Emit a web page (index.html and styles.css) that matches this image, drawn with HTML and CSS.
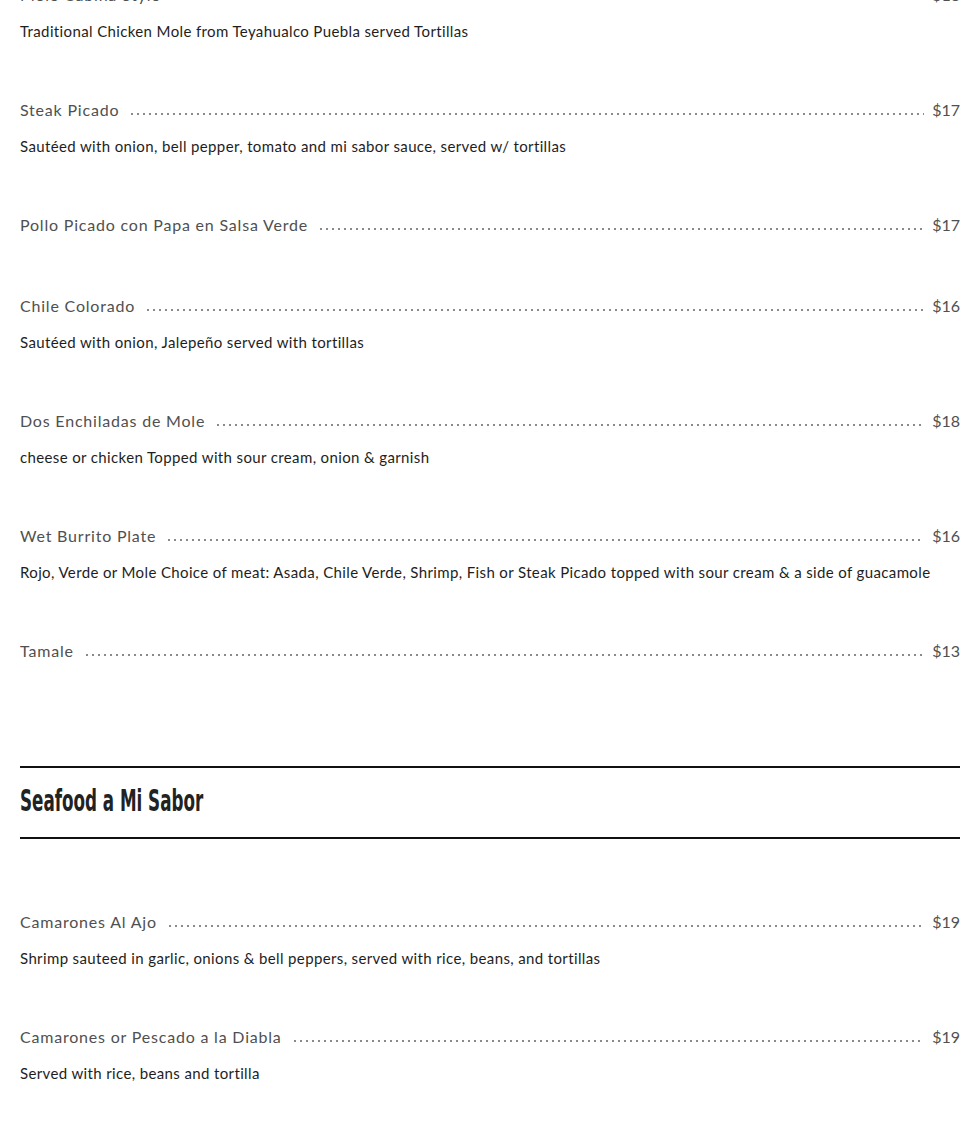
FILE: index.html
```html
<!DOCTYPE html>
<html lang="en">
<head>
<meta charset="utf-8">
<title>Menu</title>
<link rel="stylesheet" href="styles.css">
</head>
<body>
<main class="menu">
  <section class="items">
    <div class="item">
      <div class="row"><span class="name">Mole Cabina Style</span><span class="leader"></span><span class="price">$18</span></div>
      <p class="desc">Traditional Chicken Mole from Teyahualco Puebla served Tortillas</p>
    </div>
    <div class="item">
      <div class="row"><span class="name">Steak Picado</span><span class="leader"></span><span class="price">$17</span></div>
      <p class="desc">Sautéed with onion, bell pepper, tomato and mi sabor sauce, served w/ tortillas</p>
    </div>
    <div class="item">
      <div class="row"><span class="name">Pollo Picado con Papa en Salsa Verde</span><span class="leader"></span><span class="price">$17</span></div>
    </div>
    <div class="item">
      <div class="row"><span class="name">Chile Colorado</span><span class="leader"></span><span class="price">$16</span></div>
      <p class="desc">Sautéed with onion, Jalepeño served with tortillas</p>
    </div>
    <div class="item">
      <div class="row"><span class="name">Dos Enchiladas de Mole</span><span class="leader"></span><span class="price">$18</span></div>
      <p class="desc">cheese or chicken Topped with sour cream, onion &amp; garnish</p>
    </div>
    <div class="item">
      <div class="row"><span class="name">Wet Burrito Plate</span><span class="leader"></span><span class="price">$16</span></div>
      <p class="desc">Rojo, Verde or Mole Choice of meat: Asada, Chile Verde, Shrimp, Fish or Steak Picado topped with sour cream &amp; a side of guacamole</p>
    </div>
    <div class="item">
      <div class="row"><span class="name">Tamale</span><span class="leader"></span><span class="price">$13</span></div>
    </div>
  </section>

  <header class="section-head">
    <h2 class="section-title">Seafood a Mi Sabor</h2>
  </header>

  <section class="items items-after">
    <div class="item">
      <div class="row"><span class="name">Camarones Al Ajo</span><span class="leader"></span><span class="price">$19</span></div>
      <p class="desc">Shrimp sauteed in garlic, onions &amp; bell peppers, served with rice, beans, and tortillas</p>
    </div>
    <div class="item">
      <div class="row"><span class="name">Camarones or Pescado a la Diabla</span><span class="leader"></span><span class="price">$19</span></div>
      <p class="desc">Served with rice, beans and tortilla</p>
    </div>
  </section>
</main>
</body>
</html>
```

FILE: styles.css
```css
html, body {
  margin: 0;
  padding: 0;
  background: #ffffff;
}

.menu {
  margin-top: -17px;
  padding: 0 5px 0 20px;
}

.items {
  display: flex;
  flex-direction: column;
}

.item {
  margin-bottom: 57px;
}

.row {
  display: flex;
  align-items: baseline;
  height: 24px;
  line-height: 24px;
  font-family: "Lato", "Liberation Sans", sans-serif;
  font-weight: 400;
  font-size: 16px;
  letter-spacing: 0.8px;
  color: #505050;
}

.name {
  white-space: nowrap;
}

.leader {
  flex: 1;
  align-self: stretch;
  margin: 0 8px 0 10px;
  background-image: radial-gradient(circle, #8a8a8a 0.8px, transparent 1.3px);
  background-size: 6px 4px;
  background-repeat: repeat-x;
  background-position: left 14px;
}

.price {
  white-space: nowrap;
  letter-spacing: 0;
}

.desc {
  margin: 12px 0 -2px 0;
  line-height: 24px;
  font-family: "Lato", "Liberation Sans", sans-serif;
  font-size: 15px;
  letter-spacing: 0.37px;
  color: #1e1e1e;
}

.section-head {
  margin-top: 46px;
  border-top: 2px solid #111111;
  border-bottom: 2px solid #111111;
  padding: 13px 0 16px;
}

.section-title {
  margin: 0;
  line-height: 40px;
  font-family: "DejaVu Sans Condensed", "Liberation Sans", sans-serif;
  font-weight: bold;
  font-size: 30px;
  color: #222222;
  transform: scaleX(0.62);
  transform-origin: left center;
  white-space: nowrap;
}

.items-after {
  margin-top: 71px;
}
```
